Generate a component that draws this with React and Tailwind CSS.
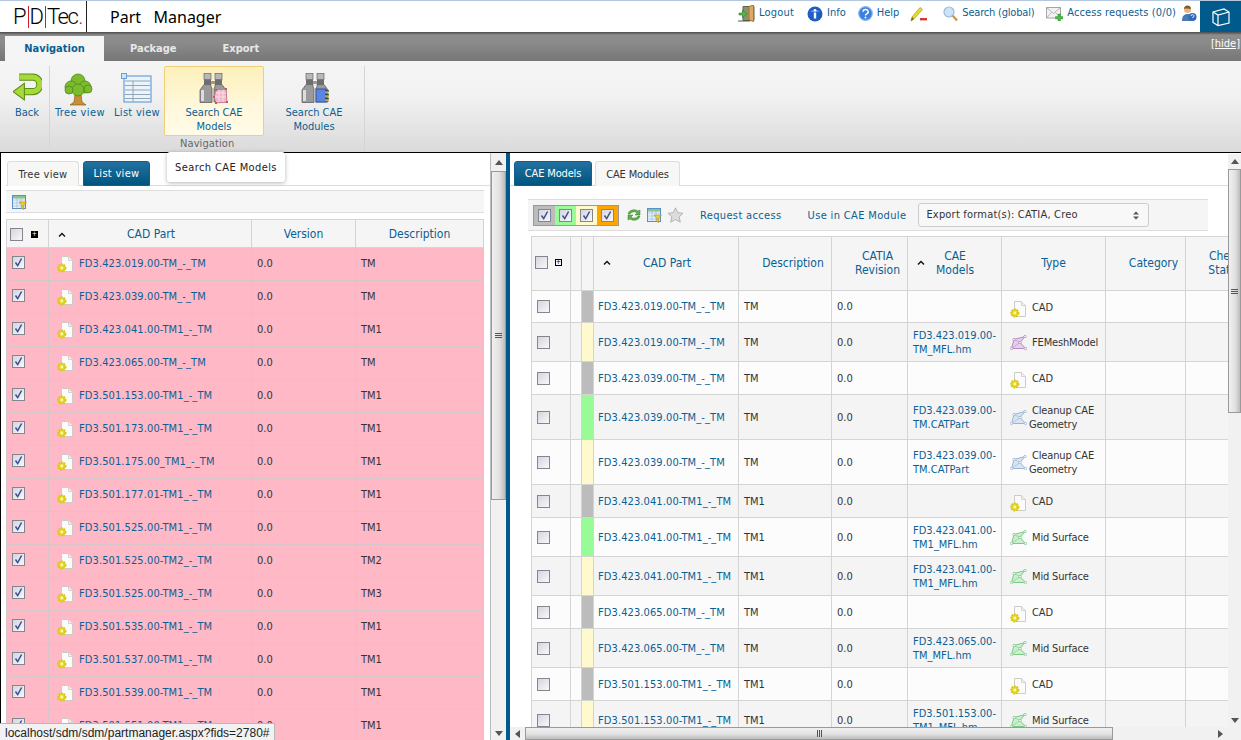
import React from "react";

const LINK = "text-[#0a5f94]";

function FileGear({ className = "" }) {
  return (
    <svg width="17" height="18" viewBox="0 0 17 18" className={className}>
      <path d="M4.500 1.500h7l4 4v11h-11z" fill="#fbfbfb" stroke="#cfcaca" />
      <path d="M11.500 1.500v4h4" fill="#eee" stroke="#d6d2d2" />
      <circle cx="4.800" cy="13" r="3.700" fill="#e6d625" stroke="#d4c716" strokeWidth="1.800" strokeDasharray="1.700 1" />
      <circle cx="4.800" cy="13" r="1.400" fill="#fff8b5" />
    </svg>
  );
}

function Mesh({ color }) {
  const m = {
    purple: ["#e6cfec", "#b58cc2"],
    blue: ["#d8e4f2", "#9db4d6"],
    green: ["#c9efcd", "#7ec78c"],
  }[color];
  return (
    <svg width="17" height="16" viewBox="0 0 17 16" className="shrink-0">
      <path d="M1.500 13.500 4 4.500 15 1.500 10 7.500 15.500 13.500z" fill={m[0]} stroke={m[1]} />
      <path d="M4 4.500 10 7.500M1.500 13.500 10 7.500" stroke={m[1]} strokeWidth=".6" fill="none" />
      {[[1.5, 13.5], [4, 4.5], [15, 1.5], [10, 7.5], [15.5, 13.5]].map(([x, y], i) => (
        <circle key={i} cx={x} cy={y} r="1.200" fill="#fff" stroke={m[1]} strokeWidth=".8" />
      ))}
    </svg>
  );
}

function Check({ checked = false, size = "w-[13px] h-[13px]" }) {
  return (
    <span className={`inline-flex items-center justify-center border border-[#85858f] bg-[linear-gradient(135deg,#d4d6de,#f8f8fb)] ${size}`}>
      {checked && (
        <svg width="11" height="11" viewBox="0 0 11 11">
          <path d="M2.500 5.500 4.700 8.600 8.600 1.500" fill="none" stroke="#3b4f96" strokeWidth="1.500" />
        </svg>
      )}
    </span>
  );
}

function Caret() {
  return (
    <svg width="8" height="5" viewBox="0 0 8 5" className="shrink-0">
      <path d="M1 4.500 4 1.500 7 4.500" fill="none" stroke="#111" strokeWidth="1.400" />
    </svg>
  );
}

function FilterGrid() {
  return (
    <svg width="15" height="15" viewBox="0 0 15 15">
      <rect x=".5" y=".5" width="13" height="13" fill="#e8f1fb" stroke="#5b8fc7" />
      <path d="M1 5h12M1 8h12M1 11h12M5 1v12M9 1v12" stroke="#9cbfe3" strokeWidth=".7" />
      <rect x="1" y="1" width="12" height="2.500" fill="#86c48a" />
      <path d="M7 7h7.500l-2.800 3.200v4.300l-1.900-1V10.200z" fill="#efd02f" stroke="#a8871a" strokeWidth=".6" />
    </svg>
  );
}

function Triangle({ dir }) {
  const d = { up: "M0 5 4 0 8 5z", down: "M0 0 4 5 8 0z", left: "M5 0 0 4 5 8z", right: "M0 0 5 4 0 8z" }[dir];
  const w = dir === "left" || dir === "right" ? 5 : 8;
  const h = dir === "left" || dir === "right" ? 8 : 5;
  return (
    <svg width={w} height={h} viewBox={`0 0 ${w} ${h}`}>
      <path d={d} fill="#555" />
    </svg>
  );
}

function VScroll({ width, thumb, top }) {
  return (
    <div className={`flex h-full shrink-0 flex-col items-stretch bg-[#f1f1f1] ${width}`}>
      <div className={`flex shrink-0 items-center justify-center ${top}`}>
        <Triangle dir="up" />
      </div>
      <div className={`flex shrink-0 flex-col items-center justify-center border border-[#9a9a9a] bg-[linear-gradient(90deg,#f0f0f0,#e2e2e2_55%,#bdbdbd)] ${thumb}`}>
        <span className="mb-[1px] h-[1px] w-[7px] bg-[#555]" />
        <span className="mb-[1px] h-[1px] w-[7px] bg-[#555]" />
        <span className="h-[1px] w-[7px] bg-[#555]" />
      </div>
      <div className="flex-1" />
      <div className="flex h-[14px] shrink-0 items-center justify-center">
        <Triangle dir="down" />
      </div>
    </div>
  );
}

function TopItem({ ml, icon, label, text = "" }) {
  return (
    <div className={`flex items-center ${ml}`}>
      {icon}
      {label && <span className={`ml-[4px] ${text} ${LINK}`}>{label}</span>}
    </div>
  );
}

const DoorIcon = (
  <svg width="17" height="17" viewBox="0 0 17 17">
    <path d="M5 1.500h11v14H5z" fill="#8a9468" stroke="#5d6644" />
    <path d="M11 1.500 15.500 0v16.500L11 15z" fill="#e0a764" stroke="#a8743a" />
    <path d="M1 8h3.500V5.500L9 9l-4.500 3.500V10H1z" fill="#59b64a" stroke="#2f7d2a" strokeWidth=".6" />
    <path d="M0 16h12" stroke="#555" />
  </svg>
);
const InfoIcon = (
  <svg width="16" height="16" viewBox="0 0 16 16">
    <circle cx="8" cy="8" r="7.500" fill="#1f5cc4" />
    <path d="M3 6a6 5 0 0 1 10 0" fill="#5e93e4" />
    <circle cx="8" cy="4.300" r="1.300" fill="#fff" />
    <rect x="6.800" y="6.500" width="2.400" height="6" fill="#fff" />
  </svg>
);
const HelpIcon = (
  <svg width="15" height="15" viewBox="0 0 15 15">
    <circle cx="7.500" cy="7.500" r="6.800" fill="#3c7fdc" stroke="#8fb6e8" strokeWidth="1.200" />
    <path d="M5 5.700a2.600 2.300 0 1 1 3.600 2.200c-.9.400-1.100.8-1.100 1.600" fill="none" stroke="#fff" strokeWidth="1.500" />
    <circle cx="7.500" cy="11.500" r="1" fill="#fff" />
  </svg>
);
const PenIcon = (
  <svg width="17" height="16" viewBox="0 0 17 16">
    <path d="M1 15 2 11 10 1.500 12.500 3.500 4 13z" fill="#ecd928" stroke="#a89a18" strokeWidth=".7" />
    <path d="M1 15 2 11 4 13z" fill="#6f6a20" />
    <rect x="10" y="12" width="7" height="2.400" fill="#d23a2f" />
  </svg>
);
const SearchIcon = (
  <svg width="15" height="16" viewBox="0 0 15 16">
    <circle cx="6" cy="6" r="5" fill="#cfe3f6" stroke="#9dbbd6" strokeWidth="1.200" />
    <path d="M9.800 9.800 14 14.500" stroke="#c8924e" strokeWidth="2.200" />
  </svg>
);
const MailIcon = (
  <svg width="17" height="15" viewBox="0 0 17 15">
    <rect x=".5" y="1.500" width="14" height="10.500" fill="#f3f3f3" stroke="#a5a5a5" />
    <path d="M.5 1.500 7.500 7.500 14.500 1.500M.5 12 5.500 6.500M14.500 12 9.500 6.500" fill="none" stroke="#b5b5b5" />
    <path d="M12 8h2.500v2.500H17V13h-2.500v2H12v-2H9.500v-2.500H12z" fill="#4db848" stroke="#2e8a2b" strokeWidth=".4" />
  </svg>
);
const UserIcon = (
  <svg width="16" height="17" viewBox="0 0 16 17">
    <circle cx="6.500" cy="4.500" r="3.500" fill="#e5b583" />
    <path d="M3 4a3.500 3.500 0 0 1 7 0c-2 0-4-1-7 0z" fill="#8a5a2b" />
    <path d="M1 16c0-5 2-7 5.500-7S12 11 12 16z" fill="#4a79b5" />
    <circle cx="11.500" cy="12" r="4" fill="#2f6bb5" />
    <path d="M10 11a1.500 1.300 0 1 1 2 1.200c-.4.200-.5.400-.5.800" fill="none" stroke="#fff" strokeWidth=".9" />
  </svg>
);

function Binoculars({ kind, className = "" }) {
  return (
    <svg width="30" height="32" viewBox="0 0 30 32" className={className}>
      <rect x="5" y="0.500" width="7" height="6" fill="#b8b8b8" stroke="#666" strokeWidth=".7" />
      <rect x="16" y="0.500" width="7" height="6" fill="#b8b8b8" stroke="#666" strokeWidth=".7" />
      <rect x="5" y="6.500" width="7" height="5" fill="#6e6e6e" />
      <rect x="16" y="6.500" width="7" height="5" fill="#6e6e6e" />
      <rect x="12" y="8" width="4" height="3" fill="#999" />
      <path d="M5 11.500h7v2l1 2v14H1V17z" fill="#9a9a9a" stroke="#555" strokeWidth=".7" />
      <path d="M16 11.500h7l4 5.500v12H15V15.500l1-2z" fill="#9a9a9a" stroke="#555" strokeWidth=".7" />
      <rect x="2" y="17" width="3" height="11" fill="#dcdcdc" />
      <rect x="16" y="17" width="3" height="11" fill="#dcdcdc" />
      {kind === "model" ? (
        <g>
          <path d="M17 17 27 16 28 29 17 30 15 24z" fill="#efb9cc" stroke="#c76a8f" strokeWidth=".8" />
          <path d="M17 20h10M16 24h11M20 17v12M24 17v12" stroke="#fbe3ec" strokeWidth=".8" />
          {[[17, 17], [27, 16], [28, 29], [17, 30], [15, 24]].map(([x, y], i) => (
            <rect key={i} x={x - 1} y={y - 1} width="2" height="2" fill="#c4557f" />
          ))}
        </g>
      ) : (
        <g>
          <rect x="15" y="16" width="10" height="13" fill="#5b86e0" stroke="#2f56a8" />
          {[18, 22, 26].map((y) => (
            <path key={y} d={`M24 ${y}h4`} stroke="#111" strokeWidth="1" />
          ))}
          {[19, 23, 27].map((y) => (
            <path key={y} d={`M24 ${y}h4`} stroke="#f3dc3a" strokeWidth="1" />
          ))}
        </g>
      )}
    </svg>
  );
}

function RibbonButton({ w, ml = "", icon, children, active, text = "" }) {
  return (
    <div
      className={`flex shrink-0 flex-col items-center pt-[6px] text-center leading-[14px] ${LINK} ${w} ${ml} ${
        active ? "h-[70px] rounded-[2px] border border-[#efcf78] bg-[linear-gradient(#fdf0bb,#fff8dc_60%,#fffbe8)]" : "h-[70px] border border-transparent"
      }`}
    >
      <div className="flex h-[32px] items-start justify-center">{icon}</div>
      <div className={`mt-[1px] ${text}`}>{children}</div>
    </div>
  );
}

const leftRows = [
  ["FD3.423.019.00-TM_-_TM", "TM"],
  ["FD3.423.039.00-TM_-_TM", "TM"],
  ["FD3.423.041.00-TM1_-_TM", "TM1"],
  ["FD3.423.065.00-TM_-_TM", "TM"],
  ["FD3.501.153.00-TM1_-_TM", "TM1"],
  ["FD3.501.173.00-TM1_-_TM", "TM1"],
  ["FD3.501.175.00_TM1_-_TM", "TM1"],
  ["FD3.501.177.01-TM1_-_TM", "TM1"],
  ["FD3.501.525.00-TM1_-_TM", "TM1"],
  ["FD3.501.525.00-TM2_-_TM", "TM2"],
  ["FD3.501.525.00-TM3_-_TM", "TM3"],
  ["FD3.501.535.00-TM1_-_TM", "TM1"],
  ["FD3.501.537.00-TM1_-_TM", "TM1"],
  ["FD3.501.539.00-TM1_-_TM", "TM1"],
  ["FD3.501.551.00-TM1_-_TM", "TM1"],
];

const GRAY = "bg-[#bcbcbc]";
const GREEN = "bg-[#98fb98]";
const CREAM = "bg-[#fffacd]";

const rightRows = [
  ["FD3.423.019.00-TM_-_TM", "TM", "", "cad", "CAD", GRAY, "h-[32px]"],
  ["FD3.423.019.00-TM_-_TM", "TM", "FD3.423.019.00-TM_MFL.hm", "purple", "FEMeshModel", CREAM, "h-[39px]"],
  ["FD3.423.039.00-TM_-_TM", "TM", "", "cad", "CAD", GRAY, "h-[33px]"],
  ["FD3.423.039.00-TM_-_TM", "TM", "FD3.423.039.00-TM.CATPart", "blue", "Cleanup CAE Geometry", GREEN, "h-[45px]"],
  ["FD3.423.039.00-TM_-_TM", "TM", "FD3.423.039.00-TM.CATPart", "blue", "Cleanup CAE Geometry", CREAM, "h-[45px]"],
  ["FD3.423.041.00-TM1_-_TM", "TM1", "", "cad", "CAD", GRAY, "h-[33px]"],
  ["FD3.423.041.00-TM1_-_TM", "TM1", "FD3.423.041.00-TM1_MFL.hm", "green", "Mid Surface", GREEN, "h-[39px]"],
  ["FD3.423.041.00-TM1_-_TM", "TM1", "FD3.423.041.00-TM1_MFL.hm", "green", "Mid Surface", CREAM, "h-[39px]"],
  ["FD3.423.065.00-TM_-_TM", "TM", "", "cad", "CAD", GRAY, "h-[33px]"],
  ["FD3.423.065.00-TM_-_TM", "TM", "FD3.423.065.00-TM_MFL.hm", "green", "Mid Surface", CREAM, "h-[39px]"],
  ["FD3.501.153.00-TM1_-_TM", "TM1", "", "cad", "CAD", GRAY, "h-[33px]"],
  ["FD3.501.153.00-TM1_-_TM", "TM1", "FD3.501.153.00-TM1_MFL.hm", "green", "Mid Surface", CREAM, "h-[39px]"],
];

const cellL = "border border-[#d8c6cb] px-[5px]";
const cellR = "border border-[#d4d4d4] px-[5px] pt-[2px]";
const headL = "border border-[#d4d4d4] bg-[#f5f5f5] pt-[1px] font-normal text-center text-[12px]";
const headR = "border border-[#d4d4d4] bg-[#f5f5f5] pb-[2px] font-normal text-center text-[12px] leading-[14px]";

function Tab({ active, w, text = "tracking-[.3px]", children }) {
  return (
    <div
      className={`flex h-[25px] items-center justify-center rounded-t-[3px] border pt-[2px] ${text} ${w} ${
        active
          ? "border-[#0f5f8f] bg-[linear-gradient(#22709f,#005580)] text-white"
          : "border-b-0 border-[#ddd] bg-[#f7f7f5] text-[#333]"
      }`}
    >
      {children}
    </div>
  );
}

export default function App() {
  return (
    <div className="relative flex h-[740px] w-[1241px] flex-col overflow-hidden bg-white font-['DejaVu_Sans_Condensed','DejaVu_Sans',sans-serif] text-[11px] text-[#333]">
      {/* top header */}
      <header className="flex h-[32px] shrink-0 items-center border-t border-[#b4c7dc] bg-white">
        <div className="ml-[13px] flex w-[73px] items-center font-['Roboto',sans-serif] text-[22px] font-light leading-none text-black">
          <span>P</span>
          <span className="mx-[1px] h-[22px] w-[1px] bg-[#c8202f]" />
          <span>D</span>
          <span className="mx-[1px] h-[22px] w-[1px] bg-[#c8202f]" />
          <span className="tracking-[-1.5px]">Tec</span>
          <span className="ml-[1px] text-[#c8202f]">.</span>
        </div>
        <div className="h-full w-[1px] bg-[#222]" />
        <div className="ml-[23px] whitespace-pre font-['Noto_Sans',sans-serif] text-[16px] text-black">Part   Manager</div>
        <div className="ml-auto flex h-full items-center">
          <div className="flex items-center pb-[6px]">
            <TopItem ml="" icon={DoorIcon} label="Logout" text="tracking-[.2px]" />
            <TopItem ml="ml-[13px]" icon={InfoIcon} label="Info" />
            <TopItem ml="ml-[12px]" icon={HelpIcon} label="Help" />
            <TopItem ml="ml-[11px]" icon={PenIcon} />
            <TopItem ml="ml-[16px]" icon={SearchIcon} label="Search (global)" text="tracking-[-.2px]" />
            <TopItem ml="ml-[12px]" icon={MailIcon} label="Access requests (0/0)" text="tracking-[.1px]" />
            <TopItem ml="ml-[5px]" icon={UserIcon} />
          </div>
          <div className="ml-[3px] flex h-full w-[41px] items-center justify-center bg-[#005a8c]">
            <svg width="20" height="20" viewBox="0 0 20 20" fill="none" stroke="#fff" strokeWidth="1.200">
              <path d="M2 5 13 2 18 5 18 16 7 18.500 2 15.500z" />
              <path d="M2 5 7 8 18 5M7 8v10.500" />
            </svg>
          </div>
        </div>
      </header>

      {/* tab strip */}
      <div className="flex h-[29px] shrink-0 items-end bg-[linear-gradient(#4a4a4a_0,#8d8d8d_3px,#8a8a8a_40%,#767676)] pl-[5px] font-bold">
        <div className={`flex h-[25px] w-[99px] items-center justify-center bg-[#f5f5f5] pt-[1px] text-[11px] ${LINK}`}>Navigation</div>
        <div className="ml-[26px] flex h-[25px] items-center pt-[1px] text-[11px] text-[#e8e8e8]">Package</div>
        <div className="ml-[46px] flex h-[25px] items-center pt-[1px] text-[11px] text-[#e8e8e8]">Export</div>
        <div className="mb-[9px] ml-auto pr-[1px] text-[11px] font-normal text-white underline">[hide]</div>
      </div>

      {/* ribbon */}
      <div className="flex h-[91px] shrink-0 bg-[linear-gradient(#f5f5f5,#f1f1f1_40%,#dadada)] pt-[5px]">
        <div className="h-[80px] w-[50px] shrink-0 border-r border-[#d5d5d5]">
          <RibbonButton w="w-[49px]" ml="pl-[5px]" icon={
            <svg width="29" height="31" viewBox="0 0 28 30" className="-mt-[1px]">
              <path d="M6 5h13a6.500 6.500 0 0 1 0 14H8" fill="none" stroke="#5c8c12" strokeWidth="7" />
              <path d="M6 5h13a6.500 6.500 0 0 1 0 14H8" fill="none" stroke="#a6d93a" strokeWidth="5" />
              <path d="M11 11v16L0 19z" fill="#a6d93a" stroke="#5c8c12" />
            </svg>
          }>Back</RibbonButton>
        </div>
        <div className="flex w-[315px] shrink-0 border-r border-[#d5d5d5]">
          <RibbonButton w="w-[58px]" ml="ml-[1px]" text="tracking-[.4px]" icon={
            <svg width="30" height="33" viewBox="0 0 30 33" className="-ml-[4px]">
              <path d="M12 22h6l1 7 4 3H7l4-3z" fill="#c98f35" stroke="#8a5f1c" strokeWidth=".7" />
              {[[15, 8, 7], [8, 14, 6], [22, 14, 6], [15, 17, 6], [6, 17, 4], [25, 16, 4]].map(([x, y, r], i) => (
                <circle key={i} cx={x} cy={y} r={r} fill="#7dbb2e" stroke="#4e8a14" strokeWidth=".8" />
              ))}
            </svg>
          }>Tree view</RibbonButton>
          <RibbonButton w="w-[48px]" ml="ml-[4px]" text="tracking-[.3px]" icon={
            <svg width="32" height="31" viewBox="0 0 32 31">
              <rect x="3" y="3" width="27" height="26" fill="#eaf4fc" stroke="#6d9fd2" strokeWidth="1.200" />
              <path d="M4 8h25M4 12.500h25M4 17h25M4 21.500h25M4 25.500h25" stroke="#93a4b4" />
              <path d="M12 8v21" stroke="#93a4b4" />
              <rect x=".5" y=".5" width="5" height="5" fill="#cfe4fa" stroke="#6d9fd2" />
            </svg>
          }>List view</RibbonButton>
          <RibbonButton w="w-[100px]" ml="ml-[3px]" active icon={<Binoculars kind="model" />}>
            Search CAE<br />Models
          </RibbonButton>
          <RibbonButton w="w-[100px]" icon={<Binoculars kind="module" className="ml-[3px]" />}>
            Search CAE<br />Modules
          </RibbonButton>
        </div>
      </div>

      {/* main */}
      <main className="flex min-h-0 flex-1 border-t border-black">
        {/* left panel */}
        <section className="w-[490px] shrink-0 overflow-hidden border-l border-black pl-[5px] pt-[8px]">
          <div className="flex h-[25px] gap-[4px] border-b border-[#ddd] pl-[1px]">
            <Tab w="w-[72px]">Tree view</Tab>
            <Tab w="w-[67px]" active>List view</Tab>
          </div>
          <div className="mt-[4px] flex h-[23px] w-[478px] items-center border-y border-[#ddd] bg-[#f6f6f6] pl-[6px] pt-[1px]">
            <FilterGrid />
          </div>
          <table className="mt-[6px] w-[478px] table-fixed border-collapse">
            <colgroup>
              <col className="w-[42px]" />
              <col className="w-[203px]" />
              <col className="w-[104px]" />
              <col />
            </colgroup>
            <thead>
              <tr className="h-[28px]">
                <th className={headL}>
                  <div className="flex items-center pl-[3px]">
                    <Check size="w-[13px] h-[13px]" />
                    <span className="ml-[8px] flex h-[7px] w-[7px] items-center justify-center bg-black text-[7px] leading-none text-white">+</span>
                  </div>
                </th>
                <th className={headL}>
                  <div className={`flex items-center pl-[9px] ${LINK}`}>
                    <Caret />
                    <span className="ml-[61px]">CAD Part</span>
                  </div>
                </th>
                <th className={`${headL} ${LINK}`}>Version</th>
                <th className={`${headL} ${LINK}`}>Description</th>
              </tr>
            </thead>
            <tbody>
              {leftRows.map(([part, d]) => (
                <tr key={part} className="h-[33px] bg-[#ffb8c5]">
                  <td className={cellL}>
                    <div className="-mt-[3px] flex"><Check checked size="w-[13px] h-[13px]" /></div>
                  </td>
                  <td className={cellL}>
                    <div className="flex items-center pl-[3px]">
                      <FileGear className="shrink-0" />
                      <span className={`ml-[5px] tracking-[.1px] ${LINK}`}>{part}</span>
                    </div>
                  </td>
                  <td className={`${cellL} text-[#333]`}><span className="block">0.0</span></td>
                  <td className={`${cellL} text-[#333]`}><span className="block">{d}</span></td>
                </tr>
              ))}
            </tbody>
          </table>
        </section>

        <VScroll width="w-[16px] border-l border-[#bbb]" thumb="h-[329px]" top="h-[18px]" />
        <div className="w-[4px] shrink-0 bg-[#005a8c]" />

        {/* right panel */}
        <section className="flex min-w-0 flex-1 flex-col">
          <div className="flex min-h-0 flex-1">
            <div className="w-[718px] shrink-0 overflow-hidden">
              <div className="flex h-[33px] w-[718px] gap-[3px] border-b border-[#ddd] pl-[4px] pt-[8px]">
                <Tab w="w-[78px]" text="tracking-[-.15px]" active>CAE Models</Tab>
                <Tab w="w-[85px]" text="tracking-[-.15px]">CAE Modules</Tab>
              </div>
              <div className="ml-[18px] mt-[13px] flex h-[32px] w-[680px] items-center border-y border-[#ddd] bg-[#f5f5f5] pl-[5px]">
                <div className="flex h-[21px] border border-[#999]">
                  {["bg-[#bcbcbc]", "bg-[#98fb98]", "bg-[#fffacd]", "bg-[#ffa500]"].map((c) => (
                    <span key={c} className={`flex w-[21px] items-center justify-center ${c}`}>
                      <Check checked size="w-[13px] h-[13px]" />
                    </span>
                  ))}
                </div>
                <svg width="16" height="16" viewBox="0 0 16 16" className="ml-[7px]">
                  <path d="M2 7a6 5 0 0 1 10-3l2-1v5H9l2-2a4 3 0 0 0-7 1z" fill="#62b04a" stroke="#3b8030" strokeWidth=".5" />
                  <path d="M14 9a6 5 0 0 1-10 3l-2 1V8h5L5 10a4 3 0 0 0 7-1z" fill="#62b04a" stroke="#3b8030" strokeWidth=".5" />
                </svg>
                <span className="ml-[5px] flex"><FilterGrid /></span>
                <svg width="17" height="16" viewBox="0 0 17 16" className="ml-[5px]">
                  <path d="M8.500.800 10.800 5.700 16 6.300 12.200 9.900 13.300 15.200 8.500 12.500 3.700 15.200 4.800 9.900 1 6.300 6.200 5.700z" fill="#dcdcdc" stroke="#b5b5b5" />
                </svg>
                <span className={`ml-[16px] pt-[2px] tracking-[.35px] ${LINK}`}>Request access</span>
                <span className={`ml-[26px] pt-[2px] tracking-[.35px] ${LINK}`}>Use in CAE Module</span>
                <div className="ml-[12px] flex h-[24px] w-[231px] items-center justify-between rounded-[3px] border border-[#ccc] bg-[#f8f8f8] pl-[7px] pr-[9px] text-[#333]">
                  <span className="tracking-[.2px]">Export format(s): CATIA, Creo</span>
                  <svg width="6" height="9" viewBox="0 0 6 9"><path d="M0 3.500 3 .500 6 3.500zM0 5.500 3 8.500 6 5.500z" fill="#555" /></svg>
                </div>
              </div>
              <table className="ml-[21px] mt-[5px] w-[734px] table-fixed border-collapse">
                <colgroup>
                  <col className="w-[39px]" />
                  <col className="w-[11px]" />
                  <col className="w-[12px]" />
                  <col className="w-[145px]" />
                  <col className="w-[93px]" />
                  <col className="w-[76px]" />
                  <col className="w-[94px]" />
                  <col className="w-[104px]" />
                  <col className="w-[80px]" />
                  <col className="w-[80px]" />
                </colgroup>
                <thead>
                  <tr className="h-[54px]">
                    <th className={headR}>
                      <div className="flex items-center pl-[3px]">
                        <Check />
                        <span className="ml-[7px] flex h-[7px] w-[7px] items-center justify-center border border-black text-[7px] leading-none text-black">+</span>
                      </div>
                    </th>
                    <th className={headR} />
                    <th className={headR} />
                    <th className={headR}>
                      <div className={`flex items-center pl-[9px] ${LINK}`}>
                        <Caret />
                        <span className="ml-[32px]">CAD Part</span>
                      </div>
                    </th>
                    <th className={`${headR} pl-[16px] ${LINK}`}>Description</th>
                    <th className={`${headR} pl-[16px] ${LINK}`}>CATIA<br />Revision</th>
                    <th className={headR}>
                      <div className={`flex items-center pl-[9px] ${LINK}`}>
                        <Caret />
                        <span className="ml-[11px]">CAE<br />Models</span>
                      </div>
                    </th>
                    <th className={`${headR} ${LINK}`}>Type</th>
                    <th className={`${headR} pl-[16px] ${LINK}`}>Category</th>
                    <th className={`${headR} ${LINK}`}>Check<br />Status</th>
                  </tr>
                </thead>
                <tbody>
                  {rightRows.map((r, i) => (
                    <tr key={i} className={`${r[6]} ${i % 2 ? "bg-[#f4f4f4]" : "bg-[#fcfcfc]"}`}>
                      <td className="border border-[#d4d4d4] px-[5px]"><div className="flex"><Check /></div></td>
                      <td className={cellR} />
                      <td className={`border border-[#d4d4d4] ${r[5]}`} />
                      <td className={`${cellR} pl-[4px] tracking-[.1px] ${LINK}`}>{r[0]}</td>
                      <td className={cellR}>{r[1]}</td>
                      <td className={cellR}>0.0</td>
                      <td className={`${cellR} leading-[14px] ${LINK}`}>{r[2]}</td>
                      <td className={`${cellR} pl-[8px] pr-[2px] leading-[14px]`}>
                        <div className="flex items-center">
                          {r[3] === "cad" ? <FileGear className="shrink-0 translate-y-[1px]" /> : <Mesh color={r[3]} />}
                          <span className="ml-[2px] indent-[3px] tracking-[-.15px]">{r[4]}</span>
                        </div>
                      </td>
                      <td className={cellR} />
                      <td className={cellR} />
                    </tr>
                  ))}
                </tbody>
              </table>
            </div>
            <div className="flex flex-1 flex-col pt-[1px]">
              <VScroll width="w-[13px]" thumb="h-[244px]" top="h-[15px]" />
            </div>
          </div>
          <div className="flex h-[13px] shrink-0 items-center bg-[#f1f1f1]">
            <div className="flex w-[15px] shrink-0 justify-center"><Triangle dir="left" /></div>
            <div className="flex h-full w-[588px] items-center justify-center gap-[1px] border border-[#9a9a9a] bg-[linear-gradient(#f0f0f0,#e2e2e2_55%,#bdbdbd)]">
              <span className="h-[7px] w-[1px] bg-[#555]" />
              <span className="h-[7px] w-[1px] bg-[#555]" />
              <span className="h-[7px] w-[1px] bg-[#555]" />
            </div>
            <div className="flex flex-1 justify-end pr-[5px]"><Triangle dir="right" /></div>
            <div className="w-[13px] shrink-0" />
          </div>
        </section>
      </main>

      {/* ribbon group caption + overlays */}
      <div className="absolute left-[180px] top-[136px] tracking-[.1px] text-[#666]">Navigation</div>
      <div className="absolute left-[167px] top-[152px] flex h-[30px] w-[118px] items-center justify-center rounded-[3px] bg-white pt-[2px] tracking-[.4px] text-[#222] shadow-[0_1px_4px_rgba(0,0,0,.3)]">
        Search CAE Models
      </div>
      <div className="absolute bottom-0 left-0 flex h-[17px] w-[275px] items-center border-r border-t border-[#b8b8b8] bg-[#f2f2f2] pl-[5px] pt-[2px] font-['Liberation_Sans',sans-serif] text-[12px] text-[#222]">
        localhost/sdm/sdm/partmanager.aspx?fids=2780#
      </div>
    </div>
  );
}
